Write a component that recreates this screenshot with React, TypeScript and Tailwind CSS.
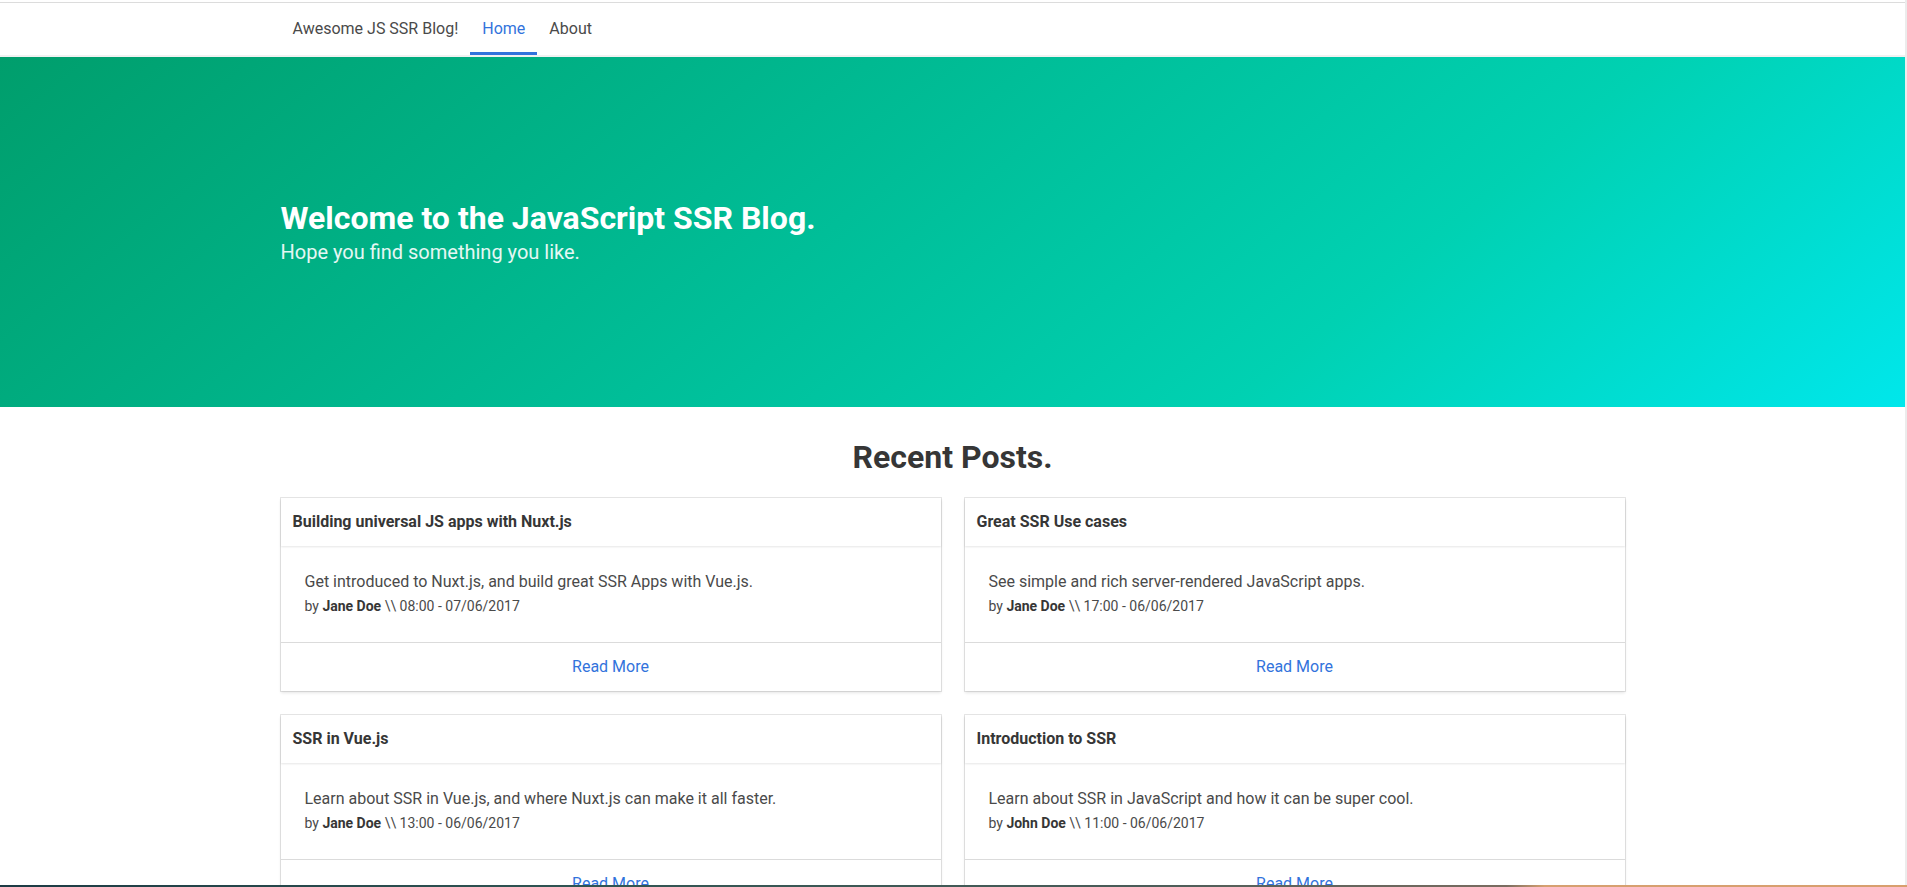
import React from "react";

type Post = {
  title: string;
  desc: string;
  author: string;
  date: string;
};

const posts: Post[] = [
  {
    title: "Building universal JS apps with Nuxt.js",
    desc: "Get introduced to Nuxt.js, and build great SSR Apps with Vue.js.",
    author: "Jane Doe",
    date: "08:00 - 07/06/2017",
  },
  {
    title: "Great SSR Use cases",
    desc: "See simple and rich server-rendered JavaScript apps.",
    author: "Jane Doe",
    date: "17:00 - 06/06/2017",
  },
  {
    title: "SSR in Vue.js",
    desc: "Learn about SSR in Vue.js, and where Nuxt.js can make it all faster.",
    author: "Jane Doe",
    date: "13:00 - 06/06/2017",
  },
  {
    title: "Introduction to SSR",
    desc: "Learn about SSR in JavaScript and how it can be super cool.",
    author: "John Doe",
    date: "11:00 - 06/06/2017",
  },
];

function Card({ post }: { post: Post }) {
  return (
    <div className="bg-white shadow-[0_2px_3px_rgba(10,10,10,0.1),0_0_0_1px_rgba(10,10,10,0.1)] flex flex-col">
      <div className="shadow-[0_1px_2px_rgba(10,10,10,0.1)] px-3 py-3 leading-6 text-[16px] font-bold text-[#363636]">
        {post.title}
      </div>
      <div className="p-6 text-[#4a4a4a]">
        <p className="text-[16px] leading-6">{post.desc}</p>
        <p className="text-[16px] leading-6">
          <span className="text-[14px]">
            by <strong className="font-bold text-[#363636]">{post.author}</strong> \\ {post.date}
          </span>
        </p>
      </div>
      <div className="border-t border-[#dbdbdb] flex">
        <a className="flex-1 text-center py-3 leading-6 text-[16px] text-[#3273dc] cursor-pointer">
          Read More
        </a>
      </div>
    </div>
  );
}

export default function App() {
  return (
    <div className="h-screen overflow-hidden bg-white font-[family-name:Roboto,sans-serif] text-[#4a4a4a] leading-normal relative">
      <div className="pr-[2px]">
        {/* top chrome line */}
        <div className="h-[2px] bg-white" />
        <div className="h-px bg-[#dcdcdc]" />
        {/* navbar */}
        <nav className="h-[52px] bg-white">
          <div className="w-[1344px] mx-auto h-full flex items-stretch">
            <a className="px-3 flex items-center text-[16px] text-[#4a4a4a]">Awesome JS SSR Blog!</a>
            <a className="px-3 flex items-center text-[16px] text-[#3273dc] border-b-[3px] border-[#3273dc] pt-[3px]">
              Home
            </a>
            <a className="px-3 flex items-center text-[16px] text-[#4a4a4a]">About</a>
          </div>
        </nav>
        <div className="h-[2px] bg-[#f1f1f1]" />
        {/* hero */}
        <section className="h-[350px] bg-[linear-gradient(141deg,#009e6c_0%,#00d1b2_71%,#00e7eb_100%)] flex items-center">
          <div className="w-[1344px] mx-auto text-white">
            <h1 className="text-[32px] leading-[36px] font-bold">Welcome to the JavaScript SSR Blog.</h1>
            <h2 className="text-[20px] leading-[25px] mt-[4px] text-white/90">Hope you find something you like.</h2>
          </div>
        </section>
        {/* posts */}
        <section className="pt-8">
          <div className="w-[1344px] mx-auto">
            <h2 className="text-center text-[32px] leading-[36px] font-bold text-[#363636] mb-[23px]">
              Recent Posts.
            </h2>
            <div className="grid grid-cols-2 gap-6">
              {posts.map((p) => (
                <Card key={p.title} post={p} />
              ))}
            </div>
          </div>
        </section>
      </div>
      {/* right window edge */}
      <div className="fixed top-0 right-0 bottom-0 w-[2px] bg-[#ececec]" />
      {/* desktop strip at bottom */}
      <div className="fixed left-0 right-0 bottom-0 h-[2px] bg-[linear-gradient(90deg,#1d3b44_0%,#2f5452_30%,#4a5c58_60%,#7a6c60_79%,#d6a070_81%,#d89f6e_100%)]" />
    </div>
  );
}
